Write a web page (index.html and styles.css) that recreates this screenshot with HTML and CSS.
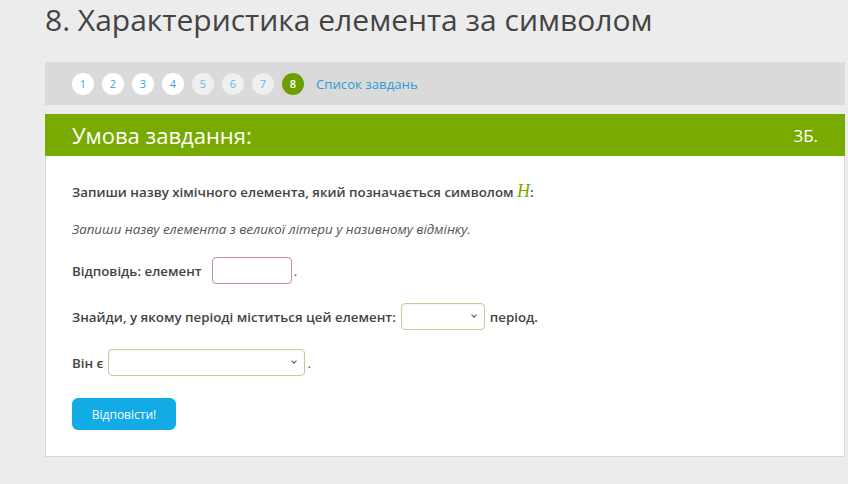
FILE: index.html
```html
<!DOCTYPE html>
<html lang="uk">
<head>
  <meta charset="UTF-8" />
  <meta name="viewport" content="width=device-width, initial-scale=1.0" />
  <title>Характеристика елемента за символом</title>
  <link rel="stylesheet" href="styles.css">
</head>

<body>
  <div class="pagina">
    <h1 class="titulo">8. Характеристика елемента за символом</h1>

    <!-- Navegación de ejercicios -->
    <div class="nav">
      <span class="num">1</span>
      <span class="num">2</span>
      <span class="num">3</span>
      <span class="num">4</span>
      <span class="num claro">5</span>
      <span class="num claro">6</span>
      <span class="num claro">7</span>
      <span class="num activo">8</span>
      <a class="lista" href="#">Список завдань</a>
    </div>

    <div class="cabecera">
      <h2>Умова завдання:</h2>
      <span class="puntos">3Б.</span>
    </div>

    <div class="panel">
      <p class="pregunta">Запиши назву хімічного елемента, який позначається символом <span class="simbolo">H</span>:</p>
      <p class="nota">Запиши назву елемента з великої літери у називному відмінку.</p>

      <div class="fila">
        Відповідь: елемент <input type="text" class="respuesta" /><span class="punto">.</span>
      </div>

      <div class="fila">
        Знайди, у якому періоді міститься цей елемент:
        <span class="caja-sel sel-corto"><select class="sel"><option></option></select></span>
        період.
      </div>

      <div class="fila">
        Він є <span class="caja-sel sel-largo"><select class="sel"><option></option></select></span><span class="punto">.</span>
      </div>

      <button class="enviar">Відповісти!</button>
    </div>
  </div>
</body>

</html>
```

FILE: styles.css
```css
body {
  margin: 0;
  background-color: #ececec;
  font-family: "Open Sans", sans-serif;
  color: #444;
}

.pagina {
  width: 800px;
  margin-left: 45px;
}

.titulo {
  margin: 0;
  height: 62px;
  font-size: 30px;
  font-weight: 400;
  line-height: 40px;
  color: #444;
}

.nav {
  display: flex;
  align-items: center;
  gap: 8px;
  height: 43px;
  padding-left: 27px;
  background-color: #dadada;
}

.num {
  display: flex;
  justify-content: center;
  align-items: center;
  width: 22px;
  height: 22px;
  border-radius: 50%;
  background-color: #fff;
  color: #3f9fd6;
  font-size: 11px;
}

.num.claro {
  background-color: #eef0f1;
  color: #6cb5e0;
}

.num.activo {
  background-color: #6c9e00;
  color: #fff;
  font-weight: 600;
}

.lista {
  margin-left: 4px;
  color: #2f9ad6;
  font-size: 13.2px;
  text-decoration: none;
}

.cabecera {
  display: flex;
  justify-content: space-between;
  align-items: center;
  height: 42px;
  margin-top: 9px;
  padding: 0 27px;
  background-color: #78aa00;
  color: #fff;
}

.cabecera h2 {
  margin: 0;
  font-size: 22px;
  font-weight: 400;
}

.puntos {
  font-size: 17px;
}

.panel { /* contenido del ejercicio */
  padding: 25px 26px 26px;
  background-color: #fff;
  border: 1px solid #d8d8d8;
  border-top: none;
  font-size: 13.33px;
  font-weight: 600;
  color: #444;
}

.panel p {
  margin: 0;
  line-height: 20px;
}

.simbolo {
  font-family: "Liberation Serif", serif;
  font-style: italic;
  font-weight: 400;
  font-size: 18px;
  color: #78aa00;
}

.nota {
  margin-top: 17px !important;
  font-style: italic;
  font-weight: 400;
  color: #555;
}

.fila {
  display: flex;
  align-items: center;
  gap: 5px;
  height: 27px;
  margin-top: 18px;
}

.fila + .fila {
  margin-top: 19px;
}

.respuesta {
  width: 80px;
  height: 27px;
  margin-left: 5px;
  box-sizing: border-box;
  border: 1px solid #c58bb8;
  border-radius: 4px;
}

.punto {
  margin-left: -3px;
  font-weight: 400;
}

.caja-sel {
  position: relative;
  display: block;
  height: 27px;
}

.caja-sel::after { /* flecha del desplegable */
  content: "";
  position: absolute;
  right: 9px;
  top: 10px;
  width: 3px;
  height: 3px;
  border-right: 1.5px solid #555;
  border-bottom: 1.5px solid #555;
  transform: rotate(45deg);
  pointer-events: none;
}

.sel {
  appearance: none;
  width: 100%;
  height: 27px;
  box-sizing: border-box;
  border: 1px solid #c9c9a0;
  border-radius: 4px;
  background-color: #fff;
  box-shadow: inset 0 1px 2px rgba(0, 0, 0, 0.05);
}

.sel-corto {
  width: 84px;
}

.sel-largo {
  width: 197px;
}

.enviar {
  display: block;
  margin-top: 22px;
  width: 104px;
  height: 32px;
  border: none;
  border-radius: 6px;
  background-color: #12abe6;
  color: #fff;
  font-family: "Open Sans", sans-serif;
  font-size: 12px;
  cursor: pointer;
}
```
